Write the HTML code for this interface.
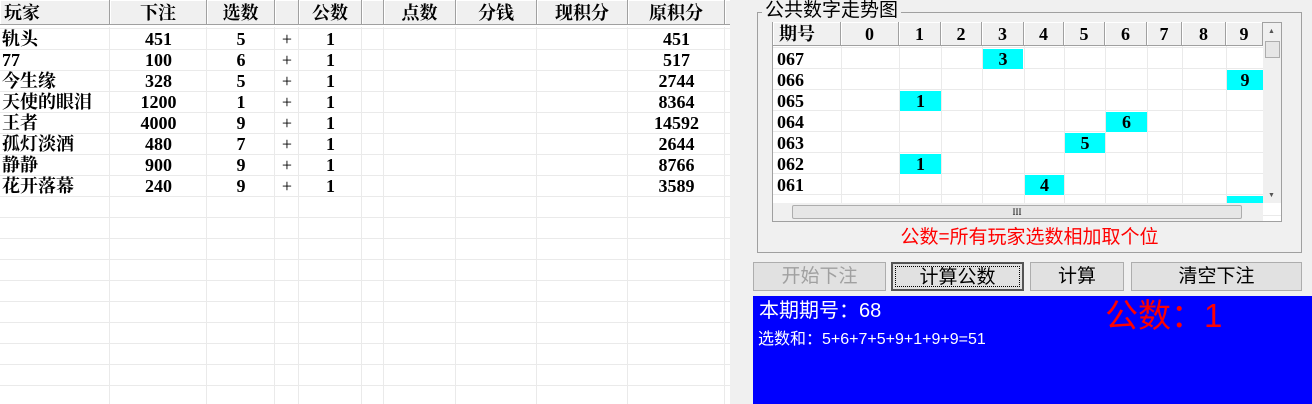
<!DOCTYPE html><html><head><meta charset="utf-8"><style>
body{margin:0;width:1312px;height:404px;background:#f0f0f0;position:relative;overflow:hidden;font-family:"Liberation Serif","Noto Serif CJK SC",serif;}
.a{position:absolute}
#lg{left:0;top:0;width:730px;height:404px;background:#fff;
background-image:linear-gradient(#eaeaea 1px,transparent 1px);background-size:100% 21px;background-position:0 7px;}
.vl{position:absolute;top:27px;bottom:0;width:1px;background:#eaeaea}
.hd{position:absolute;top:0;height:25px;background:#f0f0f0;border-right:1px solid #a0a0a0;border-bottom:1px solid #a0a0a0;box-shadow:inset 1px 1px #fff;font-size:18px;line-height:26px;text-align:center;box-sizing:border-box;font-weight:bold}
.c{position:absolute;font-size:18px;line-height:21px;font-weight:bold;white-space:nowrap}
.rh{position:absolute;top:22px;height:24px;background:#f0f0f0;border-right:1px solid #a0a0a0;border-bottom:1px solid #a0a0a0;box-shadow:inset 1px 1px #fff;box-sizing:border-box;text-align:center;font-size:18px;line-height:24px;font-weight:bold}
.cy{position:absolute;background:#00ffff;text-align:center;font-size:18px;line-height:20px;font-weight:bold;height:20px}
.btn{position:absolute;top:262px;height:29px;background:#e1e1e1;border:1px solid #adadad;box-sizing:border-box;text-align:center;font-size:19px;line-height:27px;font-family:"Liberation Sans","Noto Sans CJK SC",sans-serif}
</style></head><body>
<div id="lg" class="a">
<div class="vl" style="left:109px"></div><div class="vl" style="left:206px"></div><div class="vl" style="left:274px"></div><div class="vl" style="left:298px"></div><div class="vl" style="left:361px"></div><div class="vl" style="left:383px"></div><div class="vl" style="left:455px"></div><div class="vl" style="left:536px"></div><div class="vl" style="left:627px"></div><div class="vl" style="left:724px"></div>
<div class="hd" style="left:0;width:110px;text-align:left;padding-left:4px">玩家</div>
<div class="hd" style="left:110px;width:97px">下注</div>
<div class="hd" style="left:207px;width:68px">选数</div>
<div class="hd" style="left:275px;width:24px"></div>
<div class="hd" style="left:299px;width:63px">公数</div>
<div class="hd" style="left:362px;width:22px"></div>
<div class="hd" style="left:384px;width:72px">点数</div>
<div class="hd" style="left:456px;width:81px">分钱</div>
<div class="hd" style="left:537px;width:91px">现积分</div>
<div class="hd" style="left:628px;width:97px">原积分</div>
<div class="hd" style="left:725px;width:5px;border-right:none"></div>
</div>
<div class="a" style="left:0;top:29px;width:730px">
<div class="c" style="left:2px;top:0">轨头<br>77<br>今生缘<br>天使的眼泪<br>王者<br>孤灯淡酒<br>静静<br>花开落幕</div>
<div class="c" style="left:110px;width:97px;text-align:center;top:0">451<br>100<br>328<br>1200<br>4000<br>480<br>900<br>240</div>
<div class="c" style="left:207px;width:68px;text-align:center;top:0">5<br>6<br>5<br>1<br>9<br>7<br>9<br>9</div>
<div class="c" style="left:275px;width:24px;text-align:center;top:0;font-weight:normal">+<br>+<br>+<br>+<br>+<br>+<br>+<br>+</div>
<div class="c" style="left:299px;width:63px;text-align:center;top:0">1<br>1<br>1<br>1<br>1<br>1<br>1<br>1</div>
<div class="c" style="left:628px;width:97px;text-align:center;top:0">451<br>517<br>2744<br>8364<br>14592<br>2644<br>8766<br>3589</div>
</div>
<div class="a" style="left:757px;top:12px;width:545px;height:241px;border:1px solid #a0a0a0;box-sizing:border-box"></div>
<div class="a" style="left:762px;top:0;background:#f0f0f0;padding:0 3px;font-size:19px;line-height:22px;font-family:'Liberation Sans','Noto Sans CJK SC',sans-serif">公共数字走势图</div>
<div class="a" style="left:772px;top:22px;width:510px;height:200px;background:#fff;border:1px solid #a0a0a0;box-sizing:border-box;overflow:hidden;
background-image:linear-gradient(#eaeaea 1px,transparent 1px);background-size:100% 21px;background-position:0 3px">
<div class="a" style="left:0;top:0;width:491px;height:200px">
<div class="vl" style="top:0;left:68px"></div><div class="vl" style="top:0;left:126px"></div><div class="vl" style="top:0;left:168px"></div><div class="vl" style="top:0;left:209px"></div><div class="vl" style="top:0;left:251px"></div><div class="vl" style="top:0;left:291px"></div><div class="vl" style="top:0;left:332px"></div><div class="vl" style="top:0;left:374px"></div><div class="vl" style="top:0;left:409px"></div><div class="vl" style="top:0;left:453px"></div>
</div></div>
<div class="rh" style="left:773px;width:68px;text-align:left;padding-left:6px">期号</div>
<div class="rh" style="left:841px;width:58px">0</div>
<div class="rh" style="left:899px;width:42px">1</div>
<div class="rh" style="left:941px;width:41px">2</div>
<div class="rh" style="left:982px;width:42px">3</div>
<div class="rh" style="left:1024px;width:40px">4</div>
<div class="rh" style="left:1064px;width:41px">5</div>
<div class="rh" style="left:1105px;width:42px">6</div>
<div class="rh" style="left:1147px;width:35px">7</div>
<div class="rh" style="left:1182px;width:44px">8</div>
<div class="rh" style="left:1226px;width:37px">9</div>
<div class="c" style="left:777px;top:49px;line-height:21px">067<br>066<br>065<br>064<br>063<br>062<br>061</div>
<div class="cy" style="left:983px;top:49px;width:40px">3</div>
<div class="cy" style="left:1227px;top:70px;width:36px">9</div>
<div class="cy" style="left:900px;top:91px;width:41px">1</div>
<div class="cy" style="left:1106px;top:112px;width:41px">6</div>
<div class="cy" style="left:1065px;top:133px;width:40px">5</div>
<div class="cy" style="left:900px;top:154px;width:41px">1</div>
<div class="cy" style="left:1025px;top:175px;width:39px">4</div>
<div class="cy" style="left:1227px;top:196px;width:36px;height:7px;line-height:7px;overflow:hidden"></div>
<div class="a" style="left:1263px;top:23px;width:18px;height:180px;background:#f0f0f0"><div class="a" style="left:5px;top:4px;font-size:7px;color:#555">▲</div><div class="a" style="left:2px;top:18px;width:13px;height:15px;background:#e6e6e6;border:1px solid #adadad"></div><div class="a" style="left:5px;top:168px;font-size:7px;color:#555">▼</div></div>
<div class="a" style="left:773px;top:203px;width:490px;height:18px;background:#f0f0f0"><div class="a" style="left:19px;top:2px;width:448px;height:12px;background:#e6e6e6;border:1px solid #adadad;border-radius:2px;text-align:center;font-size:9px;line-height:12px">III</div></div>
<div class="a" style="left:757px;top:226px;width:545px;text-align:center;color:#f00;font-size:19px;font-family:'Liberation Sans','Noto Sans CJK SC',sans-serif;line-height:24px">公数=所有玩家选数相加取个位</div>
<div class="btn" style="left:753px;width:133px;color:#a0a0a0">开始下注</div>
<div class="btn" style="left:891px;width:133px;border:2px solid #555;outline:1px dotted #000;outline-offset:-5px">计算公数</div>
<div class="btn" style="left:1030px;width:94px">计算</div>
<div class="btn" style="left:1131px;width:171px">清空下注</div>
<div class="a" style="left:753px;top:296px;width:559px;height:108px;background:#0000ff;font-family:'Liberation Sans','Noto Sans CJK SC',sans-serif;color:#fff">
<div class="a" style="left:6px;top:2px;font-size:20px;line-height:26px">本期期号：68</div>
<div class="a" style="left:5px;top:34px;font-size:16px;line-height:20px">选数和：5+6+7+5+9+1+9+9=51</div>
<div class="a" style="left:352px;top:0;font-size:33px;line-height:40px;color:#f00">公数：1</div>
</div>
</body></html>
